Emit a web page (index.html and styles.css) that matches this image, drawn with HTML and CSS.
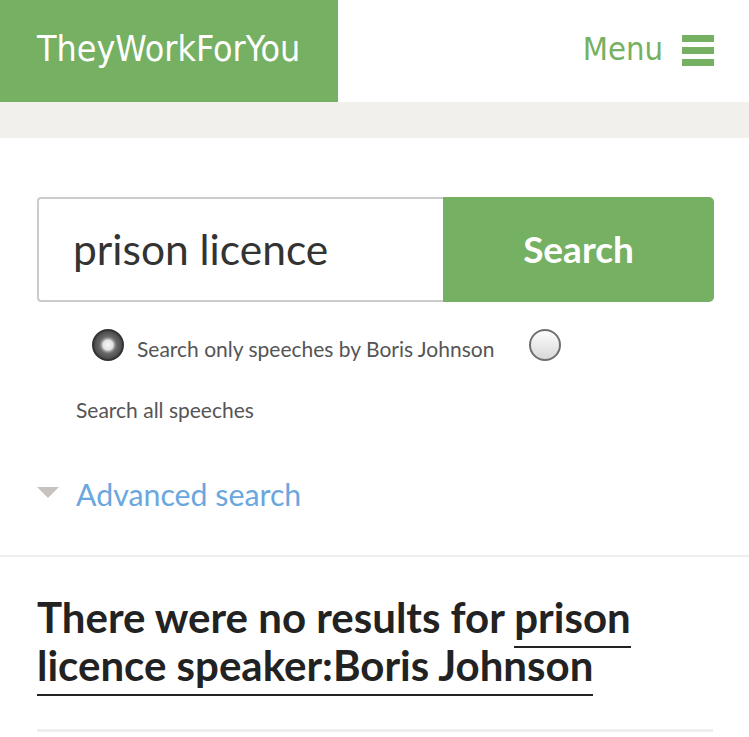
FILE: index.html
```html
<!DOCTYPE html>
<html lang="en">
<head>
<meta charset="utf-8">
<title>TheyWorkForYou search</title>
<link rel="stylesheet" href="styles.css">
</head>
<body>
<header class="site-header">
  <a class="logo" href="#">TheyWorkForYou</a>
  <a class="menu" href="#">Menu
    <svg class="hamburger" width="32" height="31" viewBox="0 0 32 31" aria-hidden="true">
      <rect x="0" y="0" width="32" height="7" fill="#76b062"/>
      <rect x="0" y="12" width="32" height="7" fill="#76b062"/>
      <rect x="0" y="24" width="32" height="7" fill="#76b062"/>
    </svg>
  </a>
</header>
<div class="band"></div>
<main class="content">
  <form class="search-form">
    <div class="search-bar">
      <div class="search-input">prison licence</div>
      <button class="search-button" type="button">Search</button>
    </div>
    <div class="options">
      <div class="option-row first">
        <span class="radio checked"></span>
        <span class="option-label">Search only speeches by Boris Johnson</span>
        <span class="radio"></span>
      </div>
      <div class="option-row second">
        <span class="option-label">Search all speeches</span>
      </div>
    </div>
    <div class="advanced">
      <span class="triangle"></span>
      <a class="advanced-link" href="#">Advanced search</a>
    </div>
  </form>
</main>
<section class="results">
  <h1 class="no-results">There were no results for <a class="query" href="#">prison licence speaker:Boris Johnson</a></h1>
  <div class="rule"></div>
</section>
</body>
</html>
```
FILE: styles.css
```css
html, body {
  margin: 0;
  padding: 0;
  background: #ffffff;
}
body {
  font-family: Lato, "Noto Sans", sans-serif;
  color: #333;
  width: 749px;
  overflow: hidden;
}
a { text-decoration: none; }

.site-header {
  display: flex;
  justify-content: space-between;
  align-items: stretch;
  height: 102px;
}
.logo {
  width: 338px;
  box-sizing: border-box;
  background: #76b062;
  color: #ffffff;
  padding-left: 37px;
  display: flex;
  align-items: center;
  font-family: "DejaVu Sans Condensed", "DejaVu Sans", sans-serif;
  font-size: 35.5px;
  padding-bottom: 6px;
}
.menu {
  display: flex;
  align-items: center;
  gap: 19px;
  padding-right: 35px;
  padding-bottom: 4px;
  color: #76b062;
  font-family: "DejaVu Sans Condensed", "DejaVu Sans", sans-serif;
  font-size: 32.5px;
}
.hamburger { display: block; margin-top: 2px; }

.band {
  height: 36px;
  background: #f1f0ec;
}

.content {
  padding: 59px 35px 0 37px;
}
.search-bar {
  display: flex;
  height: 105px;
}
.search-input {
  width: 406px;
  box-sizing: border-box;
  border: 2px solid #cccccc;
  border-right: none;
  border-radius: 4px 0 0 4px;
  display: flex;
  align-items: center;
  padding-left: 34px;
  padding-bottom: 2px;
  font-size: 42.5px;
  color: #333;
}
.search-button {
  flex: 1;
  border: none;
  border-radius: 0 5px 5px 0;
  background: #76b062;
  color: #ffffff;
  font-family: Lato, "Noto Sans", sans-serif;
  font-weight: 700;
  font-size: 37px;
  padding: 0 0 2px 0;
}

.options {
  padding-top: 26px;
  font-size: 21px;
  color: #555;
}
.option-row {
  display: flex;
  align-items: center;
}
.option-row.first {
  padding-left: 55px;
  height: 34px;
}
.option-row.first .option-label {
  margin-left: 13px;
  margin-right: 35px;
  padding-top: 6px;
}
.option-row.second {
  padding-left: 39px;
  margin-top: 35px;
}
.radio {
  width: 32px;
  height: 32px;
  box-sizing: border-box;
  border-radius: 50%;
  border: 2px solid #6f6f6f;
  background: linear-gradient(#fdfdfd, #d8d8d8);
  flex: none;
}
.radio.checked {
  border: 2px solid #333;
  background: radial-gradient(circle at 50% 50%, #f6f6f6 0, #e2e2e2 5px, #a0a0a0 6.5px, #6a6a6a 8.5px, #4a4a4a 14px);
}

.advanced {
  display: flex;
  align-items: center;
  margin-top: 52px;
  height: 40px;
}
.triangle {
  width: 0;
  height: 0;
  border-left: 11px solid transparent;
  border-right: 11px solid transparent;
  border-top: 11px solid #c7c2bd;
  margin-right: 17px;
  margin-top: -4px;
}
.advanced-link {
  color: #6aa7de;
  font-size: 30.3px;
}

.results {
  margin-top: 41px;
  border-top: 2px solid #eeeeee;
  padding: 36px 37px 0 37px;
}
.no-results {
  margin: 0;
  font-family: Lato, "Noto Sans", sans-serif;
  font-weight: 700;
  font-size: 42px;
  line-height: 48px;
  color: #222;
  width: 640px;
}
.query {
  color: #222;
  border-bottom: 2px solid #222;
  padding-bottom: 4px;
}
.rule {
  margin-top: 40px;
  height: 3px;
  background: #eeeeee;
  width: 676px;
}
```
